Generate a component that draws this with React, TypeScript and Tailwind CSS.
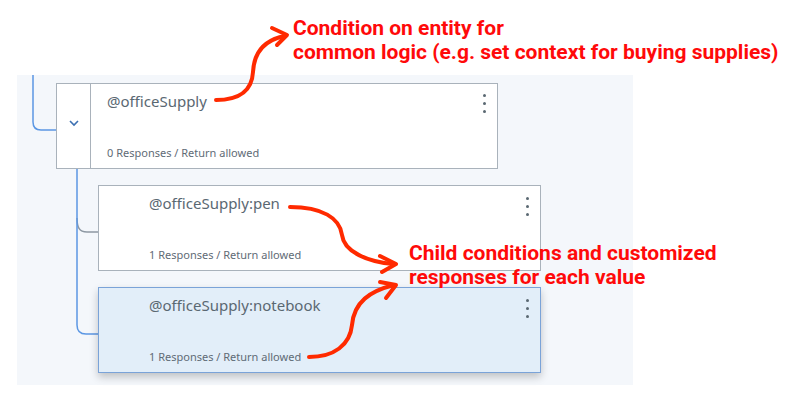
import React from "react";

const nodes = {
  parent: { title: "@officeSupply", meta: "0 Responses / Return allowed" },
  pen: { title: "@officeSupply:pen", meta: "1 Responses / Return allowed" },
  notebook: { title: "@officeSupply:notebook", meta: "1 Responses / Return allowed" },
};

function Kebab() {
  return (
    <div className="flex flex-col gap-[5px]">
      <span className="block w-[3px] h-[3px] rounded-full bg-[#5a6872]" />
      <span className="block w-[3px] h-[3px] rounded-full bg-[#5a6872]" />
      <span className="block w-[3px] h-[3px] rounded-full bg-[#5a6872]" />
    </div>
  );
}

function ChildCard({ title, meta, selected }: { title: string; meta: string; selected?: boolean }) {
  return (
    <div
      className={
        selected
          ? "flex w-[443px] h-[86px] border border-[#7aa3d8] bg-[#e2eef9] shadow-[0_4px_8px_rgba(0,0,0,0.22)]"
          : "flex w-[443px] h-[86px] border border-[#a9b2bb] bg-white"
      }
    >
      <div className="flex flex-1 flex-col justify-between pl-[50px] pt-[7px] pb-[7px]">
        <div className="text-[15px] leading-[20px] text-[#5a6872]">{title}</div>
        <div className="text-[11px] leading-[16px] text-[#5f6b76]">{meta}</div>
      </div>
      <div className="pt-[11px] pr-[11px]">
        <Kebab />
      </div>
    </div>
  );
}

export default function App() {
  return (
    <div
      className="relative w-[794px] h-[406px] overflow-hidden bg-white"
      style={{ fontFamily: '"Noto Sans", "Open Sans", sans-serif' }}
    >
      <div className="pl-[17px] pt-[75px]">
        <div className="relative w-[616px] h-[310px] bg-[#f4f7fb] pt-[8px]">
          {/* tree connectors */}
          <svg className="absolute left-0 top-0" width="616" height="310" fill="none">
            <path d="M16,0 V47 Q16,55 24,55 H39" stroke="#5b97e4" strokeWidth="1.5" />
            <path d="M60,143 C60,152 62,157 70,157 H81" stroke="#8d98a3" strokeWidth="1.5" />
            <path d="M60,94 V250 Q60,259 69,259 H81" stroke="#5b97e4" strokeWidth="1.5" />
          </svg>

          <div className="relative ml-[39px] flex w-[442px] h-[86px] border border-[#a9b2bb] bg-white">
            <div className="flex w-[34px] items-center justify-center border-r border-[#a9b2bb] pb-[6px]">
              <svg width="10" height="7" viewBox="0 0 10 7" fill="none">
                <path d="M1,1 L5,5 L9,1" stroke="#3d70b2" strokeWidth="1.6" />
              </svg>
            </div>
            <div className="flex flex-1 flex-col justify-between pl-[16px] pt-[7px] pb-[7px]">
              <div className="text-[15px] leading-[20px] text-[#5a6872]">{nodes.parent.title}</div>
              <div className="text-[11px] leading-[16px] text-[#5f6b76]">{nodes.parent.meta}</div>
            </div>
            <div className="pt-[10px] pr-[11px]">
              <Kebab />
            </div>
          </div>

          <div className="relative ml-[81px] mt-[16px] flex flex-col gap-[16px]">
            <ChildCard title={nodes.pen.title} meta={nodes.pen.meta} />
            <ChildCard title={nodes.notebook.title} meta={nodes.notebook.meta} selected />
          </div>
        </div>
      </div>

      {/* annotations */}
      <div
        className="absolute left-[293px] top-[16px] text-[21px] leading-[24px] font-bold text-[#ff0a0a] whitespace-nowrap"
        style={{ fontFamily: '"Roboto", "Noto Sans", sans-serif' }}
      >
        <div>Condition on entity for</div>
        <div>common logic (e.g. set context for buying supplies)</div>
      </div>
      <div
        className="absolute left-[409px] top-[241px] text-[21px] leading-[24px] font-bold text-[#ff0a0a] whitespace-nowrap"
        style={{ fontFamily: '"Roboto", "Noto Sans", sans-serif' }}
      >
        <div>Child conditions and customized</div>
        <div>responses for each value</div>
      </div>

      <svg className="absolute left-0 top-0 pointer-events-none" width="794" height="406" fill="none">
        <g stroke="#ff2a00" strokeWidth="4" strokeLinecap="round" strokeLinejoin="round">
          <path d="M216,100 C240,100 252,90 253,72 C254,52 264,40 285,36" />
          <path d="M272,28 L287,35 L277,45" />
          <path d="M290,207 C322,207 340,218 342,235 C344,252 368,262 394,264" />
          <path d="M380,256 L396,264 L382,272" />
          <path d="M309,357 C334,357 350,345 352,325 C354,302 370,291 394,285" />
          <path d="M380,282 L396,285 L386,298" />
        </g>
      </svg>
    </div>
  );
}
